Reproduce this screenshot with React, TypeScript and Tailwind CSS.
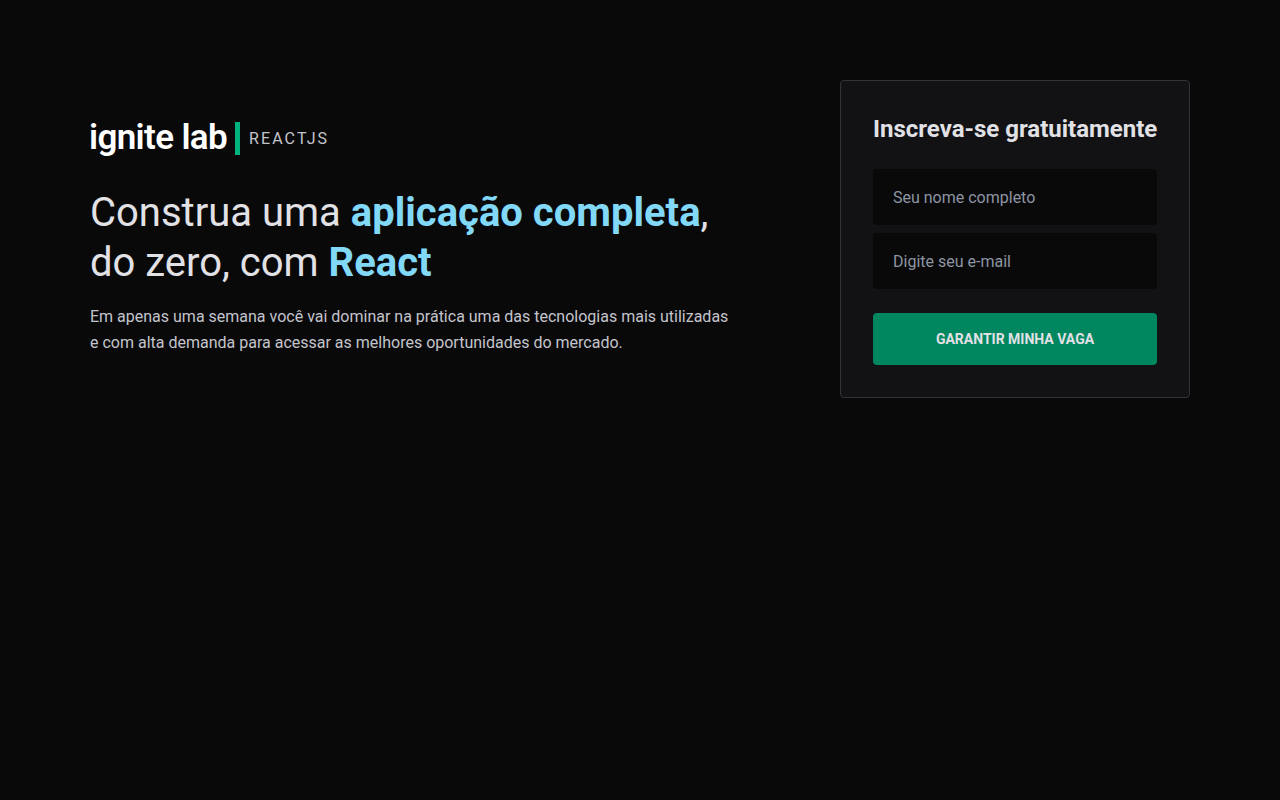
import React from 'react';

const Logo: React.FC = () => (
  <div className="flex items-center h-[34px] -ml-px">
    <span className="text-[35px] leading-[34px] font-semibold tracking-[-0.65px] text-white -translate-y-px">ignite lab</span>
    <span className="w-[5px] h-[33px] bg-[#00B37E] ml-2 -translate-y-px" />
    <span className="ml-[9px] text-base text-[#C4C4CC] tracking-[2.1px]">REACTJS</span>
  </div>
);

const App: React.FC = () => {
  return (
    <div className="min-h-screen bg-[#09090A] font-['Roboto',sans-serif] text-[#E1E1E6]">
      <main className="max-w-[1100px] mx-auto pt-20 flex items-center justify-between">
        <section className="max-w-[640px]">
          <Logo />
          <h1 className="mt-8 text-[40px] leading-[1.25]">
            Construa uma <strong className="text-[#81D8F7] font-bold">aplicação completa</strong>,<br />
            do zero, com <strong className="text-[#81D8F7] font-bold">React</strong>
          </h1>
          <p className="mt-4 text-base leading-relaxed text-[#C4C4CC]">
            Em apenas uma semana você vai dominar na prática uma das tecnologias mais utilizadas e com alta demanda para acessar as melhores oportunidades do mercado.
          </p>
        </section>

        <section className="w-[350px] p-8 bg-[#121214] border border-[#323238] rounded">
          <h2 className="text-2xl font-bold mb-6 whitespace-nowrap">Inscreva-se gratuitamente</h2>
          <form className="flex flex-col gap-2">
            <input
              type="text"
              placeholder="Seu nome completo"
              className="bg-[#09090A] rounded px-5 h-14 text-base placeholder:text-[#8D95A3] outline-none"
            />
            <input
              type="email"
              placeholder="Digite seu e-mail"
              className="bg-[#09090A] rounded px-5 h-14 text-base placeholder:text-[#8D95A3] outline-none"
            />
            <button
              type="button"
              className="mt-4 h-[52px] bg-[#00875F] rounded uppercase font-bold text-sm text-[#E1E1E6]"
            >
              Garantir minha vaga
            </button>
          </form>
        </section>
      </main>
    </div>
  );
};

export default App;
